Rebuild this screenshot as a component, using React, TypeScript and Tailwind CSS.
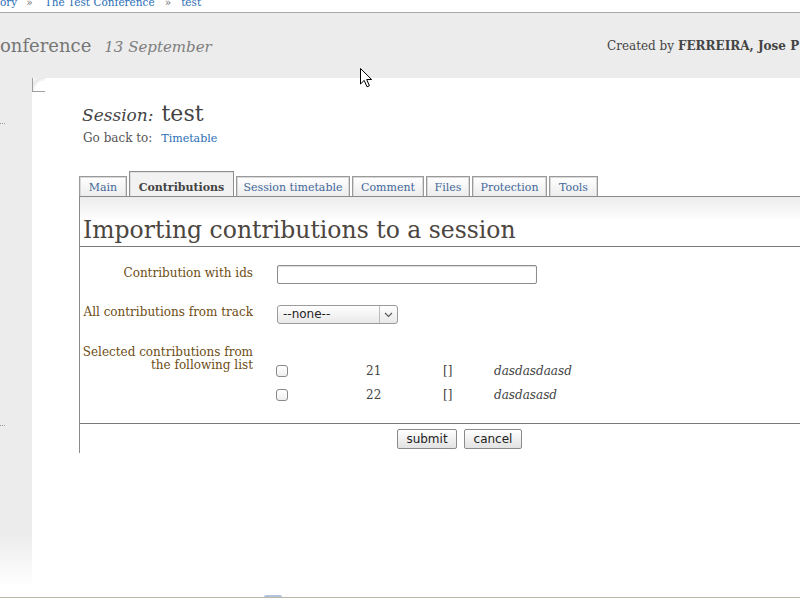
import React from "react"

const tabs = [
	{ label: "Main", w: "w-[48px]" },
	{ label: "Contributions", w: "w-[105px]", active: true },
	{ label: "Session timetable", w: "w-[114px]" },
	{ label: "Comment", w: "w-[72px]" },
	{ label: "Files", w: "w-[44px]" },
	{ label: "Protection", w: "w-[75px]" },
	{ label: "Tools", w: "w-[49px]" },
]

const contribs = [
	{ id: "21", title: "dasdasdaasd" },
	{ id: "22", title: "dasdasasd" },
]

const Tab = ({ label, w, active }: { label: string; w: string; active?: boolean }) => {
	if (active) {
		return (
			<div
				className={`${w} h-[25px] border border-b-0 border-[#8f8f8f] bg-[#f2f2f2] shadow-[inset_1px_1px_0_#e0e0e0] text-center text-[11px] leading-[31px] font-bold text-[#444]`}
			>
				{label}
			</div>
		)
	}
	return (
		<div
			className={`${w} h-[20px] border border-b-0 border-[#9a9a9a] bg-linear-to-b from-white to-[#ededed] shadow-[inset_1px_1px_0_#d8d8d8,inset_-1px_0_0_#d8d8d8] text-center text-[11px] leading-[22px] text-[#43689a]`}
		>
			{label}
		</div>
	)
}

const Cursor = () => (
	<svg className="absolute left-[360px] top-[68px]" width="13" height="20" viewBox="0 0 13 20">
		<path d="M0.5 0.5 L0.5 16 L4.2 12.4 L7 18.8 L9.4 17.8 L6.7 11.5 L11.6 11.5 Z" fill="#fff" stroke="#000" strokeWidth="1" strokeLinejoin="round" />
	</svg>
)

export default function App() {
	return (
		<div className="relative w-[800px] h-[600px] overflow-hidden bg-white font-['DejaVu_Serif',serif] text-[#444]">
			{/* breadcrumb */}
			<div className="h-[13px] overflow-hidden border-b border-[#a9a9a9]">
				<div className="-mt-[4px] flex whitespace-nowrap text-[10.5px] leading-[13px] text-[#2a6db5]">
					<span>ory</span>
					<span className="ml-[9px] text-[#777]">»</span>
					<span className="ml-[12px]">The Test Conference</span>
					<span className="ml-[10px] text-[#777]">»</span>
					<span className="ml-[10px]">test</span>
				</div>
			</div>

			{/* conference header */}
			<div className="flex h-[65px] items-center overflow-hidden bg-[#ececec] whitespace-nowrap">
				<div className="flex w-[607px] shrink-0 items-baseline gap-[13px]">
					<span className="text-[18px] text-[#767676]">onference</span>
					<span className="text-[15px] italic text-[#7e7e7e]">13 September</span>
				</div>
				<div className="text-[12px] text-[#444]">
					Created by <span className="font-bold">FERREIRA, Jose P</span>
				</div>
			</div>

			<div className="flex h-[519px]">
				{/* left sidebar */}
				<div className="w-[32px] shrink-0 bg-linear-to-b from-[#ececec] from-[88%] to-white to-[98%]">
					<div className="mt-[45px] w-[5px] border-t border-dotted border-[#999]" />
					<div className="mt-[301px] w-[5px] border-t border-dotted border-[#999]" />
				</div>

				{/* main area */}
				<div className="min-w-0 flex-1 overflow-hidden">
					<div className="h-[14px] w-[13px] rounded-tr-[1px] border-b border-l border-[#a0a0a0] bg-[radial-gradient(circle_at_100%_100%,#fff_55%,#e6e6e6_75%,#fff)]" />

					<div className="mt-[8px] flex h-[28px] items-baseline gap-[8px] pl-[50px] leading-[28px]">
						<span className="text-[17px] italic text-[#444]">Session:</span>
						<span className="text-[22px] text-[#444]">test</span>
					</div>
					<div className="flex h-[20px] items-baseline gap-[9px] pl-[51px] leading-[20px]">
						<span className="text-[12px] text-[#555]">Go back to:</span>
						<span className="text-[11px] text-[#2a6db5]">Timetable</span>
					</div>

					{/* tabs */}
					<div className="mt-[23px] flex items-end gap-[2px] pl-[47px]">
						{tabs.map((t) => (
							<Tab key={t.label} {...t} />
						))}
					</div>

					{/* content box */}
					<div className="ml-[47px] border-l border-t border-[#8a8a8a] bg-[linear-gradient(to_bottom,#ececec,#fff_24px)] pb-[4px]">
						<h2 className="border-b border-[#7a7a7a] pl-[3px] pt-[19px] pb-[2px] text-[23.5px] leading-[28px] text-[#4c4640]">
							Importing contributions to a session
						</h2>

						<div className="mt-[17px] flex items-start gap-[24px]">
							<div className="mt-[2px] w-[173px] text-right text-[12px] leading-[14px] text-[#6e4d14]">Contribution with ids</div>
							<div className="mt-[1px] h-[19px] w-[260px] rounded-[2px] border border-[#8c8c8c] bg-white shadow-[inset_0_1px_1px_#ddd]" />
						</div>

						<div className="mt-[20px] flex items-start gap-[24px]">
							<div className="mt-[1px] w-[173px] text-right text-[12px] leading-[14px] text-[#6e4d14]">All contributions from track</div>
							<div className="mt-[1px] flex h-[19px] w-[121px] items-center rounded-[3px] border border-[#9a9a9a] bg-linear-to-b from-white to-[#e9e9e9] font-['DejaVu_Sans',sans-serif] text-[12px] text-[#222]">
								<span className="flex-1 pl-[5px] leading-[17px]">--none--</span>
								<span className="flex h-full w-[18px] items-center justify-center border-l border-[#bbb]">
									<svg width="9" height="6" viewBox="0 0 9 6">
										<path d="M1 1 L4.5 4.5 L8 1" fill="none" stroke="#555" strokeWidth="1.1" />
									</svg>
								</span>
							</div>
						</div>

						<div className="mt-[22px] flex items-start gap-[24px]">
							<div className="w-[173px] text-right text-[12px] leading-[13px] text-[#6e4d14]">
								Selected contributions from
								<br />
								the following list
							</div>
							<div className="pt-[13px]">
								{contribs.map((c) => (
									<div key={c.id} className="grid h-[24px] grid-cols-[89px_77px_51px_auto] items-center text-[12px] text-[#444]">
										<span className="-ml-[1px] block h-[12px] w-[12px] rounded-[3px] border border-[#8a8a8a] bg-linear-to-b from-white to-[#f0f0f0]" />
										<span>{c.id}</span>
										<span>[]</span>
										<span className="italic">{c.title}</span>
									</div>
								))}
							</div>
						</div>

						<div className="mt-[16px] border-t border-[#7a7a7a] pt-[5px]">
							<div className="flex gap-[7px] pl-[317px] font-['DejaVu_Sans',sans-serif] text-[12px] text-[#222]">
								<button className="h-[20px] w-[60px] rounded-[2px] border border-[#8a8a8a] bg-linear-to-b from-white to-[#e2e2e2] leading-[18px]">
									submit
								</button>
								<button className="h-[20px] w-[58px] rounded-[2px] border border-[#8a8a8a] bg-linear-to-b from-white to-[#e2e2e2] leading-[18px]">
									cancel
								</button>
							</div>
						</div>
					</div>
				</div>
			</div>

			<div className="flex h-[3px] border-t border-[#bdb6a8]">
				<div className="-mt-[3px] ml-[264px] h-[2px] w-[18px] rounded-t-full bg-[#b3c3dd]" />
			</div>

			<Cursor />
		</div>
	)
}
